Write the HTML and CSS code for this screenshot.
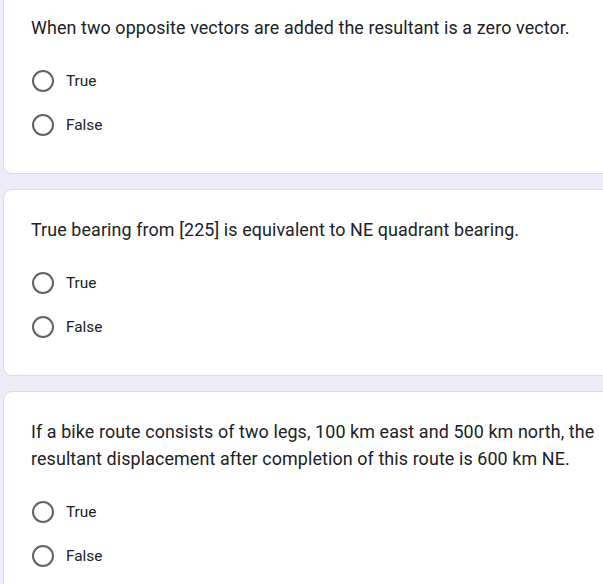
FILE: index.html
```html
<!DOCTYPE html>
<html lang="en">
<head>
<meta charset="utf-8">
<title>Quiz</title>
<link rel="stylesheet" href="styles.css">
</head>
<body>
<main class="list">
  <section class="card">
    <div class="title">When two opposite vectors are added the resultant is a zero vector.</div>
    <div class="options">
      <label class="option"><span class="radio"></span><span class="label">True</span></label>
      <label class="option"><span class="radio"></span><span class="label">False</span></label>
    </div>
  </section>
  <section class="card">
    <div class="title">True bearing from [225] is equivalent to NE quadrant bearing.</div>
    <div class="options">
      <label class="option"><span class="radio"></span><span class="label">True</span></label>
      <label class="option"><span class="radio"></span><span class="label">False</span></label>
    </div>
  </section>
  <section class="card">
    <div class="title">If a bike route consists of two legs, 100 km east and 500 km north, the resultant displacement after completion of this route is 600 km NE.</div>
    <div class="options">
      <label class="option"><span class="radio"></span><span class="label">True</span></label>
      <label class="option"><span class="radio"></span><span class="label">False</span></label>
    </div>
  </section>
</main>
</body>
</html>
```
FILE: styles.css
```css
html, body {
  margin: 0;
  padding: 0;
  background: #f0ebf8;
  overflow: hidden;
}
.list {
  display: flex;
  flex-direction: column;
  gap: 15px;
  margin: -13px -30px 0 3px;
}
.card {
  background: #fff;
  border: 1px solid #dadce0;
  border-radius: 9px;
  padding: 26px 26px 26px 27px;
}
.title {
  font-family: Roboto, "Noto Sans", sans-serif;
  font-size: 17.9px;
  line-height: 27px;
  color: #202124;
  letter-spacing: 0.1px;
  max-width: 572px;
}
.options {
  display: flex;
  flex-direction: column;
  margin-top: 18px;
}
.option {
  display: flex;
  align-items: center;
  height: 44px;
  gap: 12px;
}
.radio {
  width: 18px;
  height: 18px;
  border: 2px solid #5f6368;
  border-radius: 50%;
  margin-left: 1px;
  flex: none;
}
.label {
  font-family: Roboto, "Noto Sans", sans-serif;
  font-size: 15.4px;
  color: #202124;
}
```
